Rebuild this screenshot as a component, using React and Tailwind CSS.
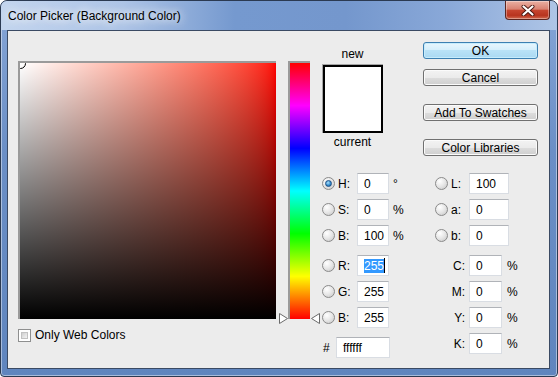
import React from 'react';

const Radio = ({ checked }) => (
  <div className="w-[13px] h-[13px] shrink-0 rounded-full border border-[#8a8a8a] bg-[radial-gradient(circle_at_35%_30%,#ffffff,#e6e6e6_50%,#c4c4c4)] flex items-center justify-center">
    {checked && (
      <div className="w-[7px] h-[7px] rounded-full border border-[#1d4f85] bg-[radial-gradient(circle_at_40%_35%,#a8e0ff,#2f88c9_60%,#17598f)]" />
    )}
  </div>
);

const TextBox = ({ value, className = '', children }) => (
  <div className={`h-[21px] flex items-center pl-[6px] bg-white border border-[#d9dde3] border-t-[#b0b3b8] ${className}`}>
    {children ?? value}
  </div>
);

const HsbRow = ({ label, value, unit, checked, className = '', children }) => (
  <div className={`flex items-center h-[21px] ${className}`}>
    <Radio checked={checked} />
    <span className="ml-[3px] w-[19px]">{label}</span>
    <TextBox value={value} className="w-[32px]">{children}</TextBox>
    <span className="ml-[4px]">{unit}</span>
  </div>
);

const LabRow = ({ label, value, className = '' }) => (
  <div className={`flex items-center h-[21px] pl-[12px] ${className}`}>
    <Radio />
    <span className="ml-[3px] w-[18px]">{label}</span>
    <TextBox value={value} className="w-[40px]" />
  </div>
);

const CmykRow = ({ label, value, className = '' }) => (
  <div className={`flex items-center h-[21px] ${className}`}>
    <span className="w-[42px] text-right">{label}</span>
    <TextBox value={value} className="ml-[4px] w-[33px]" />
    <span className="ml-[5px]">%</span>
  </div>
);

const Button = ({ children, primary, className = '' }) => (
  <div
    className={`h-[17px] w-[115px] flex items-center justify-center rounded-[3px] border ${
      primary
        ? 'border-[#3c7fb1] bg-[linear-gradient(#e8f6fd,#d3eefb_50%,#b9e2f7_50%,#aad9f3)] shadow-[inset_0_0_0_1px_#c6ecfc]'
        : 'border-[#707070] bg-[linear-gradient(#f3f3f3,#ebebeb_50%,#dddddd_50%,#cfcfcf)] shadow-[inset_0_0_0_1px_#fbfbfb]'
    } ${className}`}
  >
    {children}
  </div>
);

const Triangle = ({ dir }) => (
  <svg width="9" height="11" viewBox="0 0 9 11">
    <polygon
      points={dir === 'right' ? '0.5,0.5 8.5,5.5 0.5,10.5' : '8.5,0.5 0.5,5.5 8.5,10.5'}
      fill="#ffffff"
      stroke="#6a6a6a"
      strokeWidth="1"
    />
  </svg>
);

export default function App() {
  return (
    <div className="w-[558px] h-[377px] flex flex-col rounded-t-[7px] rounded-b-[4px] border border-[#2b3a52] bg-[linear-gradient(#86a6d7,#6b8fc6_40%,#5f85be)] shadow-[inset_0_0_0_1px_rgba(255,255,255,0.45)] overflow-hidden font-['Liberation_Sans',Arial,sans-serif] text-[12px] leading-[14px] text-black">
      {/* Title bar */}
      <div className="h-[29px] shrink-0 flex items-start bg-[linear-gradient(to_right,#c3d5ee_0%,#adc4e6_22%,#7599cf_42%,#7497cd_62%,#89a8d8_80%,#aec5e6_100%)] rounded-t-[6px]">
        <span className="ml-[7px] mt-[8px] text-[12px] leading-[14px] [text-shadow:0_0_8px_#ffffff,0_0_12px_#ffffff]">
          Color Picker (Background Color)
        </span>
        <div className="ml-auto mr-[7px] w-[45px] h-[19px] rounded-b-[4px] border border-t-0 border-[#5b2620] bg-[linear-gradient(#eab0a3,#d98272_45%,#c6452f_52%,#b8341f_80%,#d06a50)] shadow-[inset_0_0_0_1px_rgba(255,255,255,0.35)] flex items-center justify-center">
          <svg width="14" height="11" viewBox="0 0 14 11">
            <path d="M2.5 1.5 L11.5 9.5 M11.5 1.5 L2.5 9.5" stroke="#4a1812" strokeWidth="4" strokeLinecap="round" />
            <path d="M2.5 1.5 L11.5 9.5 M11.5 1.5 L2.5 9.5" stroke="#ffffff" strokeWidth="2.2" strokeLinecap="round" />
          </svg>
        </div>
      </div>

      {/* Frame + content */}
      <div className="flex-1 flex pl-[6px] pr-[7px] pb-[7px]">
        <div className="flex-1 flex items-start border border-[#3a4a63] bg-[#ececec]">
          {/* Color field */}
          <div className="ml-[10px] mt-[30px] flex flex-col">
            <div className="border-t-2 border-l-2 border-[#9a9a9a]">
              <div className="relative w-[256px] h-[256px] overflow-hidden bg-linear-to-r from-white to-[#ff0000]">
                <div className="absolute inset-0 bg-linear-to-t from-black to-transparent" />
                <div className="absolute -left-[5px] -top-[5px] w-[11px] h-[11px] rounded-full border border-black" />
              </div>
            </div>
            <div className="mt-[9px] flex items-center gap-[4px]">
              <div className="w-[13px] h-[13px] border border-[#8e8f8f] bg-white p-[2px]">
                <div className="w-full h-full bg-[linear-gradient(135deg,#cfcfcf,#f4f4f4)] border border-[#c2c2c2]" />
              </div>
              <span>Only Web Colors</span>
            </div>
          </div>

          {/* Hue slider */}
          <div className="relative ml-[12px] mt-[30px] border-t-2 border-l-2 border-[#9a9a9a]">
            <div className="w-[20px] h-[256px] bg-[linear-gradient(to_bottom,#ff0000,#ff00ff,#0000ff,#00ffff,#00ff00,#ffff00,#ff0000)]" />
            <div className="absolute -left-[11px] top-[250px] flex">
              <Triangle dir="right" />
            </div>
            <div className="absolute left-[21px] top-[250px] flex">
              <Triangle dir="left" />
            </div>
          </div>

          {/* Swatch + HSB/RGB */}
          <div className="ml-[12px] w-[100px] flex flex-col">
            <div className="w-[61px] flex flex-col items-center">
              <span className="mt-[16px]">new</span>
              <div className="mt-[3px] border-t border-l border-[#a5a5a5]">
                <div className="w-[60px] h-[68px] border-2 border-black bg-white" />
              </div>
              <span className="mt-[2px]">current</span>
            </div>
            <HsbRow label="H:" value="0" unit="°" checked className="mt-[24px]" />
            <HsbRow label="S:" value="0" unit="%" className="mt-[5px]" />
            <HsbRow label="B:" value="100" unit="%" className="mt-[5px]" />
            <HsbRow label="R:" className="mt-[9px]">
              <span className="bg-[#3399ff] text-white">255</span>
              <span className="w-[1px] h-[15px] bg-black" />
            </HsbRow>
            <HsbRow label="G:" value="255" className="mt-[5px]" />
            <HsbRow label="B:" value="255" className="mt-[5px]" />
            <div className="mt-[9px] flex items-center h-[21px]">
              <span className="w-[14px] pl-[1px]">#</span>
              <TextBox value="ffffff" className="w-[54px]" />
            </div>
          </div>

          {/* Buttons + Lab/CMYK */}
          <div className="ml-[1px] w-[116px] flex flex-col">
            <Button primary className="mt-[11px]">OK</Button>
            <Button className="mt-[10px]">Cancel</Button>
            <Button className="mt-[18px]">Add To Swatches</Button>
            <Button className="mt-[18px]">Color Libraries</Button>
            <LabRow label="L:" value="100" className="mt-[17px]" />
            <LabRow label="a:" value="0" className="mt-[5px]" />
            <LabRow label="b:" value="0" className="mt-[5px]" />
            <CmykRow label="C:" value="0" className="mt-[9px]" />
            <CmykRow label="M:" value="0" className="mt-[5px]" />
            <CmykRow label="Y:" value="0" className="mt-[5px]" />
            <CmykRow label="K:" value="0" className="mt-[5px]" />
          </div>
        </div>
      </div>
    </div>
  );
}
